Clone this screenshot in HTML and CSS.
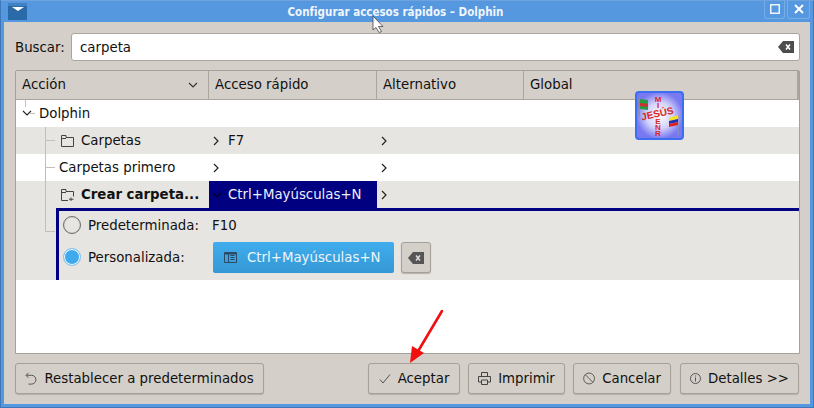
FILE: index.html
```html
<!DOCTYPE html>
<html lang="es">
<head>
<meta charset="utf-8">
<title>Configurar accesos rápidos – Dolphin</title>
<link rel="stylesheet" href="styles.css">
</head>
<body>
<div class="window">
  <header class="titlebar">
    <div class="app-icon">
      <svg width="19" height="17" viewBox="0 0 19 17"><path fill="#2a6aa8" d="M0 0h19v17H0z"/><path fill="#3f82c4" d="M0 0h19v3H0z"/><path fill="#fff" d="M4 4h12l-6 4z"/></svg>
    </div>
    <div class="title">Configurar accesos rápidos – Dolphin</div>
    <div class="win-buttons">
      <span class="win-btn win-max"><svg width="10" height="10" viewBox="0 0 10 10"><rect x=".75" y=".75" width="8.500" height="8.500" fill="none" stroke="#eef4fb" stroke-width="1.500"/></svg></span>
      <span class="win-btn"><svg width="10" height="10" viewBox="0 0 10 10"><path d="M1 1l8 8M9 1l-8 8" stroke="#fff" stroke-width="2"/></svg></span>
    </div>
  </header>
  <main class="content">
    <div class="search-row">
      <label class="search-label">Buscar:</label>
      <div class="search-box">
        <span>carpeta</span>
        <svg width="16" height="12" viewBox="0 0 16 12"><path fill="#4d4d4d" d="M5 0h11v12H5L0 6z"/><path d="M8 3.500l4 5M12 3.500l-4 5" stroke="#fff" stroke-width="1.600"/></svg>
      </div>
    </div>
    <section class="tree">
      <div class="tree-head">
        <div class="th th-first">Acción
          <svg width="10" height="6" viewBox="0 0 10 6"><path d="M1 1l4 4 4-4" fill="none" stroke="#333" stroke-width="1.100"/></svg>
        </div>
        <div class="th">Acceso rápido</div>
        <div class="th">Alternativo</div>
        <div class="th th-last">Global</div>
      </div>
      <div class="tree-body">
        <div class="row row-root">
          <svg class="twisty" width="10" height="6" viewBox="0 0 10 6"><path d="M1 1l4 4 4-4" fill="none" stroke="#222" stroke-width="1.100"/></svg>
          <span>Dolphin</span>
        </div>
        <div class="row grey">
          <div class="cell cell-action">
            <svg class="ic" width="13" height="12" viewBox="0 0 13 12"><path d="M.5 11.500v-11h4.500v2h7.500v9zM.5 3.500h4.500" fill="none" stroke="#444"/></svg>
            <span>Carpetas</span>
          </div>
          <div class="cell"><svg class="chev" width="6" height="10" viewBox="0 0 6 10"><path d="M1 1l4 4-4 4" fill="none" stroke="#222" stroke-width="1.200"/></svg><span>F7</span></div>
          <div class="cell"><svg class="chev" width="6" height="10" viewBox="0 0 6 10"><path d="M1 1l4 4-4 4" fill="none" stroke="#222" stroke-width="1.200"/></svg></div>
        </div>
        <div class="row">
          <div class="cell cell-plain">Carpetas primero</div>
          <div class="cell"><svg class="chev" width="6" height="10" viewBox="0 0 6 10"><path d="M1 1l4 4-4 4" fill="none" stroke="#222" stroke-width="1.200"/></svg></div>
          <div class="cell"><svg class="chev" width="6" height="10" viewBox="0 0 6 10"><path d="M1 1l4 4-4 4" fill="none" stroke="#222" stroke-width="1.200"/></svg></div>
        </div>
        <div class="row grey">
          <div class="cell cell-action">
            <svg class="ic" width="13" height="12" viewBox="0 0 13 12"><path d="M7 11.500H.5v-11h4.500v2h7.500v5M.5 3.500h4.500M10 8.500v3.500M8 10.250h4.500" fill="none" stroke="#444"/></svg>
            <b class="bold-action">Crear carpeta...</b>
          </div>
          <div class="cell cell-selected"><svg class="chev-down" width="10" height="6" viewBox="0 0 10 6"><path d="M1 1l4 4 4-4" fill="none" stroke="#000020" stroke-width="1.200"/></svg><span>Ctrl+Mayúsculas+N</span></div>
          <div class="cell"><svg class="chev" width="6" height="10" viewBox="0 0 6 10"><path d="M1 1l4 4-4 4" fill="none" stroke="#222" stroke-width="1.200"/></svg></div>
        </div>
        <div class="editor-wrap">
          <div class="editor">
            <div class="ed-row ed-row-top">
              <span class="radio"></span>
              <span class="ed-label">Predeterminada:</span>
              <span>F10</span>
            </div>
            <div class="ed-row">
              <span class="radio radio-on"></span>
              <span class="ed-label">Personalizada:</span>
              <div class="key-btn">
                <svg width="13" height="11" viewBox="0 0 13 11"><path d="M.5.5h12v10H.5zM4.500.5v10M6.500 3.500h4M6.500 5.500h4M6.500 7.500h4" fill="none" stroke="#2c4a63"/><path d="M.5.5h12v2H.5z" fill="#2c4a63"/></svg>
                <span>Ctrl+Mayúsculas+N</span>
              </div>
              <div class="clear-btn">
                <svg width="16" height="12" viewBox="0 0 16 12"><path fill="#555" d="M5 0h11v12H5L0 6z"/><path d="M8 3.500l4 5M12 3.500l-4 5" stroke="#ddd" stroke-width="1.500"/></svg>
              </div>
            </div>
          </div>
        </div>
        <div class="tree-lines"></div>
        <div class="tree-line-h l1"></div>
        <div class="tree-line-h l2"></div>
        <div class="tree-line-h l3"></div>
        <div class="tree-line-top"></div>
        <div class="tree-line-root"></div>
      </div>
    </section>
    <footer class="buttons">
      <button class="btn btn-reset">
        <svg width="12" height="13" viewBox="0 0 12 13"><path d="M3.500.8L1 3.300l2.500 2.500M1.500 3.300h5a4.200 4.200 0 0 1 0 8.800H3.500" fill="none" stroke="#555"/></svg>
        Restablecer a predeterminados
      </button>
      <div class="spacer"></div>
      <button class="btn btn-ok">
        <svg width="12" height="10" viewBox="0 0 12 10"><path d="M1 5.500l3 3.500 7-8.500" fill="none" stroke="#555"/></svg>
        Aceptar
      </button>
      <button class="btn btn-print">
        <svg width="13" height="13" viewBox="0 0 13 13"><path d="M3.500 4V.5h6V4M3.500 10H.5V4.500h12V10h-3M3.500 8h6v4.500h-6z" fill="none" stroke="#444"/></svg>
        Imprimir
      </button>
      <button class="btn btn-cancel">
        <svg width="13" height="13" viewBox="0 0 13 13"><circle cx="6.500" cy="6.500" r="5.800" fill="none" stroke="#555"/><path d="M2.500 2.500l8 8" stroke="#555"/></svg>
        Cancelar
      </button>
      <button class="btn btn-details">
        <svg width="11" height="11" viewBox="0 0 11 11"><circle cx="5.500" cy="5.500" r="5" fill="none" stroke="#555"/><path d="M5.500 4.500v4M5.500 2.500v1" stroke="#555"/></svg>
        Detalles &gt;&gt;
      </button>
    </footer>
  </main>
</div>

<svg class="overlay-badge" width="49" height="49" viewBox="0 0 49 49">
  <defs><radialGradient id="bg"><stop offset="0" stop-color="#fff"/><stop offset=".55" stop-color="#d4d4fb"/><stop offset="1" stop-color="#7878f0"/></radialGradient></defs>
  <rect x="1" y="1" width="47" height="47" rx="3" fill="url(#bg)" stroke="#3b6ef0" stroke-width="2"/>
  <path d="M4 7v19" stroke="#888"/><path d="M5 8l8 1v10l-8-1z" fill="#2a9a40"/><path d="M5 12l8 1v3l-8-1z" fill="#d03030"/>
  <path d="M43 24v20" stroke="#999"/><path d="M34 27l9-3v4l-9 2z" fill="#f6e020"/><path d="M34 30l9-2v3l-9 2z" fill="#2030b0"/><path d="M34 33l9-2v3l-9 2z" fill="#e02020"/>
  <text x="23" y="26" class="badge-h" transform="rotate(-12 23 26)" text-anchor="middle">JESÚS</text>
  <text x="23" y="11" class="badge-v" text-anchor="middle">M</text>
  <text x="23" y="17" class="badge-v" text-anchor="middle">I</text>
  <text x="23" y="33" class="badge-v" text-anchor="middle">E</text>
  <text x="23" y="39" class="badge-v" text-anchor="middle">N</text>
  <text x="23" y="45" class="badge-v" text-anchor="middle">R</text>
</svg>

<svg class="overlay-arrow" width="36" height="56" viewBox="0 0 36 56">
  <path d="M33 2L8 44" stroke="#f01010" stroke-width="2.600" stroke-linecap="round"/>
  <path d="M1 54l2-17 12 7z" fill="#f01010"/>
</svg>

<svg class="overlay-cursor" width="14" height="19" viewBox="0 0 14 19">
  <path d="M1 1v14l3-2.500 3 5 2.500-1-3-5H11z" fill="#fff" stroke="#444" stroke-width=".8"/>
</svg>
</body>
</html>
```

FILE: styles.css
```css
* { box-sizing: border-box; }
html, body { margin: 0; padding: 0; }
body {
  width: 814px;
  height: 408px;
  overflow: hidden;
  position: relative;
  font-family: "DejaVu Sans", sans-serif;
  font-size: 13.33px;
  color: #111;
  background: #d4cfc8;
}
.window {
  width: 814px;
  height: 408px;
  display: flex;
  flex-direction: column;
  border: 1px solid #3f78b8;
  border-top-color: #6fa3dd;
  background: #5598e0;
}
.titlebar {
  height: 21px;
  flex: none;
  display: flex;
  align-items: center;
  padding: 0 3px 0 7px;
  background: #5598e0;
}
.app-icon { display: flex; margin-top: -1px; }
.title {
  flex: 1;
  text-align: center;
  color: #f0f5fb;
  font-family: "DejaVu Sans Condensed", "DejaVu Sans", sans-serif;
  font-stretch: condensed;
  font-weight: bold;
  font-size: 11.500px;
}
.win-buttons { display: flex; gap: 2px; margin-top: -4px; }
.win-btn {
  width: 23px;
  height: 18px;
  display: flex;
  align-items: center;
  justify-content: center;
  border: 1px solid #78aee8;
  border-top: 0;
  border-radius: 0 0 3px 3px;
}
.win-max { width: 21px; }
.content {
  flex: 1;
  display: flex;
  flex-direction: column;
  margin: 0 3px 3px 3px;
  padding: 11px 11px 10px 11px;
  background: #d4cfc8;
}
.search-row {
  display: flex;
  align-items: center;
  height: 28px;
  flex: none;
}
.search-label { width: 56px; }
.search-box {
  flex: 1;
  height: 28px;
  margin-right: -1px;
  background: #fff;
  border: 1px solid #aaa59d;
  border-radius: 3px;
  display: flex;
  align-items: center;
  justify-content: space-between;
  padding: 0 5px 0 8px;
}
.tree {
  margin-top: 9px;
  height: 284px;
  flex: none;
  display: flex;
  flex-direction: column;
  border: 1px solid #a5a098;
  border-radius: 2px 2px 0 0;
  margin-right: -1px;
  background: #fff;
}
.tree-head {
  height: 29px;
  flex: none;
  display: grid;
  grid-template-columns: 193px 168px 147px 1fr;
  background: #d4cfc8;
  border-bottom: 1px solid #aaa59d;
}
.th {
  display: flex;
  align-items: center;
  justify-content: space-between;
  padding: 0 6px 2px;
  border-right: 1px solid #aaa59d;
}
.th-first svg { margin: 2px 4px 0 0; }
.th-last { border-right: 2px solid #aaa59d; }
.tree-body { flex: 1; position: relative; }
.row {
  height: 27px;
  display: grid;
  grid-template-columns: 193px 168px 147px 1fr;
  align-items: stretch;
}
.grey { background: #e7e5e1; }
.row-root {
  display: flex;
  align-items: center;
  padding: 0 0 1px 6px;
}
.twisty { margin-right: 7px; }
.cell {
  display: flex;
  align-items: center;
  padding-left: 4px;
}
.cell-action { padding-left: 45px; }
.cell-plain { padding-left: 43px; }
.ic { margin-right: 7px; }
.bold-action { font-weight: bold; white-space: nowrap; }
.chev { margin-right: 9px; flex: none; }
.chev-down { margin-right: 6px; flex: none; margin-left: -1px; }
.cell-selected {
  background: #000080;
  color: #eeeef8;
}
.editor-wrap {
  height: 72px;
  padding-left: 40px;
  background: #e7e5e1;
}
.editor {
  height: 72px;
  border-left: 3px solid #000080;
  border-top: 3px solid #000080;
  padding: 0 0 0 4px;
}
.ed-row {
  display: flex;
  align-items: center;
  height: 28px;
}
.ed-row-top { margin-bottom: 4px; }
.radio {
  width: 18px;
  height: 18px;
  border-radius: 50%;
  border: 1px solid #6f6b66;
  background: #e7e5e1;
  box-shadow: inset 0 0 1px #999;
  flex: none;
}
.radio-on {
  border: 1px solid #8cc6ee;
  background: #3fa9ec;
  box-shadow: inset 0 0 0 1px #fff;
}
.ed-label { margin-left: 7px; width: 124px; flex: none; }
.key-btn {
  width: 181px;
  height: 31px;
  margin-left: 1px;
  background: linear-gradient(#40adee, #3598d4);
  border-radius: 2px;
  color: #ecf5fb;
  display: flex;
  align-items: center;
  padding-left: 11px;
  gap: 10px;
  flex: none;
  margin-top: 1px;
}
.clear-btn {
  width: 30px;
  height: 31px;
  margin-left: 7px;
  margin-top: 1px;
  background: #d4cfc8;
  border: 1px solid #a5a098;
  border-radius: 3px;
  box-shadow: 0 1px 1px #b5b0a8;
  display: flex;
  align-items: center;
  justify-content: center;
}
.tree-lines {
  position: absolute;
  left: 29px;
  top: 27px;
  width: 1px;
  height: 104px;
  background: #c2bfb9;
}
.tree-line-h { position: absolute; left: 29px; width: 10px; height: 1px; background: #c2bfb9; }
.l1 { top: 40px; }
.l2 { top: 67px; }
.l3 { top: 131px; }
.tree-line-top { position: absolute; left: 9px; top: 0; width: 1px; height: 7px; background: #c2bfb9; }
.tree-line-root { position: absolute; left: 14px; top: 13px; width: 5px; height: 1px; background: #c2bfb9; }
.buttons {
  display: flex;
  margin-top: 9px;
  gap: 8px;
  height: 31px;
  flex: none;
}
.spacer { flex: 1; }
.btn {
  height: 31px;
  font: inherit;
  color: #111;
  padding: 0 9px;
  display: flex;
  align-items: center;
  justify-content: center;
  gap: 7px;
  background: #d4cfc8;
  border: 1px solid #a5a098;
  border-radius: 3px;
  box-shadow: 0 1px 1px #b5b0a8;
}
.btn-reset { width: 249px; }
.btn-ok { width: 92px; }
.btn-print { width: 97px; }
.btn-cancel { width: 98px; margin-right: 1px; }
.btn-details { width: 119px; }
.overlay-badge { position: absolute; left: 635px; top: 91px; }
.badge-h { font: bold 10px "Liberation Sans", sans-serif; fill: #d62828; }
.badge-v { font: bold 8px "Liberation Sans", sans-serif; fill: #d62828; }
.overlay-arrow { position: absolute; left: 409px; top: 309px; }
.overlay-cursor { position: absolute; left: 372px; top: 15px; }
```
